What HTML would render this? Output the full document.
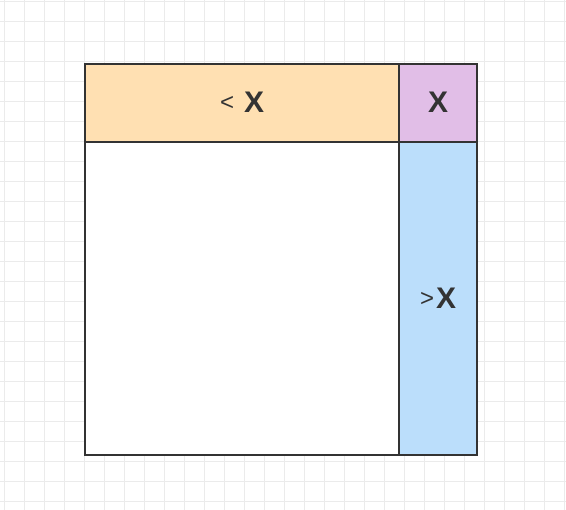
<!DOCTYPE html>
<html><head><style>
html,body{margin:0;padding:0}
body{width:566px;height:510px;position:relative;overflow:hidden;background:#fff;
background-image:linear-gradient(#ebebeb 1px,transparent 1px),linear-gradient(90deg,#ebebeb 1px,transparent 1px);
background-size:20px 20px;background-position:4px 1px;font-family:"Liberation Sans",sans-serif;color:#333}
.b{position:absolute;box-sizing:border-box;border:2px solid #333;display:flex;align-items:center;justify-content:center;font-weight:bold;font-size:30px}
.s{font-size:24px;font-weight:normal;margin-right:10px}
</style></head><body>
<div class="b" style="left:84px;top:63px;width:316px;height:393px;background:#fff"></div>
<div class="b" style="left:84px;top:63px;width:316px;height:80px;background:#ffe0b2"><span class="s">&lt;</span>X</div>
<div class="b" style="left:398px;top:63px;width:80px;height:80px;background:#e1bee7">X</div>
<div class="b" style="left:398px;top:141px;width:80px;height:315px;background:#bbdefb"><span class="s" style="margin-right:2px">&gt;</span>X</div>
</body></html>
